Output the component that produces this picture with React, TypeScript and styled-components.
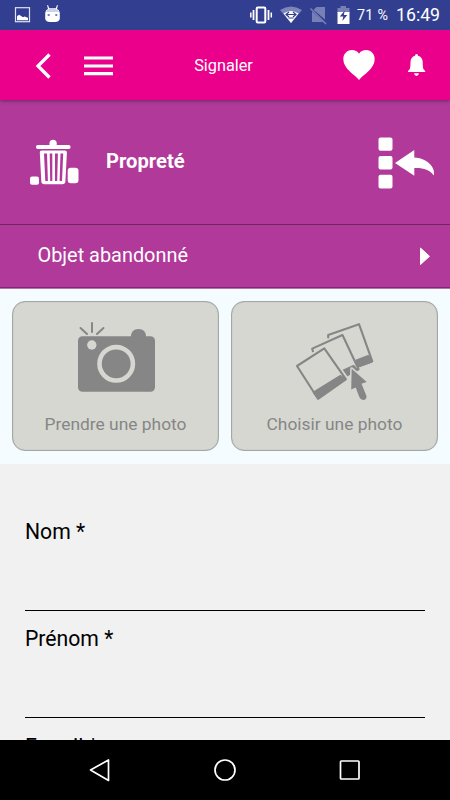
import React from "react";
import styled, { createGlobalStyle } from "styled-components";

const GlobalStyle = createGlobalStyle`
  * { box-sizing: border-box; }
  body { margin: 0; font-family: Roboto, "Liberation Sans", sans-serif; }
  svg { display: block; flex: none; }
`;

const Screen = styled.div`
  width: 450px;
  height: 800px;
  display: flex;
  flex-direction: column;
  overflow: hidden;
  background: #f1f1f1;
`;

const StatusBar = styled.div`
  height: 30px;
  flex: none;
  display: flex;
  align-items: center;
  background: #323f91;
  border-bottom: 1px solid #274b8e;
  color: #fff;
`;

const Battery = styled.span`
  width: 39px;
  font-size: 14.3px;
  line-height: 28px;
  letter-spacing: 0.3px;
  white-space: nowrap;
`;

const Clock = styled.span`
  font-size: 17.7px;
  line-height: 28px;
`;

const AppBar = styled.header`
  height: 70px;
  flex: none;
  display: flex;
  background: #eb008c;
  color: #fff;
  z-index: 1;
  box-shadow: 0 1px 3px rgba(70, 40, 80, 0.75);
`;

const Title = styled.h1`
  margin: 0;
  width: 145px;
  text-align: center;
  font-size: 16.3px;
  font-weight: 400;
  line-height: 71px;
`;

const CategoryRow = styled.div`
  height: 125px;
  flex: none;
  display: flex;
  align-items: center;
  background: #b03999;
  border-bottom: 1px solid #6e265f;
  color: #fff;
`;

const CategoryName = styled.strong`
  width: 253px;
  padding: 0 0 2px 6px;
  font-size: 20.2px;
  font-weight: 700;
  line-height: 24px;
`;

const SubCategoryRow = styled.div`
  height: 64px;
  flex: none;
  display: flex;
  align-items: center;
  justify-content: space-between;
  padding: 0 19px 2px 37.5px;
  background: #b03999;
  border-bottom: 1px solid #ab77a4;
  box-shadow: inset 0 -1px 0 #85237a;
  color: #fff;
  font-size: 19.9px;
  line-height: 24px;
`;

const PhotoArea = styled.section`
  height: 175px;
  flex: none;
  display: grid;
  grid-template-columns: 207px 207px;
  column-gap: 12px;
  padding: 12px 0 13px 12px;
  background: #f4fcff;
`;

const PhotoButton = styled.button`
  display: flex;
  flex-direction: column;
  align-items: center;
  padding: 15px 0 0;
  border: 1px solid #a3a7a8;
  border-radius: 13px;
  box-shadow: inset 0 0 1px #8c8e8e;
  background: #d6d7d1;
  color: #868686;
  font: 400 17.4px/24px Roboto, "Liberation Sans", sans-serif;
`;

const PhotoLabel = styled.span`
  margin-top: 11px;
`;

const Form = styled.form`
  flex: 1;
  min-height: 0;
  overflow: hidden;
  padding: 54px 25px 0;
`;

const Field = styled.label`
  height: 107px;
  display: flex;
  flex-direction: column;
  color: #000;
  font-size: 21.2px;
  line-height: 28px;

  &:last-child {
    padding-top: 1px;
  }
`;

const Input = styled.input`
  height: 65px;
  padding: 0;
  border: 0;
  border-bottom: 1px solid #000;
  background: transparent;
  font: inherit;
  outline: none;
`;

const NavBar = styled.nav`
  height: 60px;
  flex: none;
  display: flex;
  align-items: center;
  justify-content: space-around;
  padding: 0 37px;
  background: #000;
`;

const StatusIconsLeft = () => (
  <svg width="240" height="29" viewBox="0 0 240 29" fill="#fff">
    <rect x="15.5" y="7.7" width="14" height="14" fill="none" stroke="#dfe2f3" strokeWidth="1.2" />
    <path d="M17 20.3v-4l2-1.5 2.5 1.4 1.5 1 1.5-.8 3.5 1.3v2.600z" />
    <path d="M45.500 12q0-2 2.500-3.100l-.9-3.700.9-.2 1.200 3.300h6.600L57 5l.9.200-.9 3.700q2.500 1.100 2.500 3.100l.3 1v6q-1 3-4.600 3h-5.400q-3.600 0-4.600-3v-6z" />
    <path d="M46 12q1-3.500 6.500-3.500T59 12z" fill="#cdd1e8" />
    <rect x="47.700" y="14" width="2" height="2" fill="#7580b6" />
    <rect x="55.300" y="14" width="2" height="2" fill="#7580b6" />
  </svg>
);

const StatusIconsRight = () => (
  <svg width="117" height="29" viewBox="240 0 117 29" fill="none">
    <rect x="256.700" y="7.500" width="8.600" height="15" rx="1" stroke="#fff" strokeWidth="2" />
    <path d="M253.500 10v10M268.500 10v10" stroke="#fff" strokeWidth="1.800" />
    <path d="M250.800 12.500v5M271.300 12.500v5" stroke="#fff" strokeWidth="1.500" />
    <path d="M280 10q11-7 22 0l-11 13z" fill="#7d86bb" />
    <path d="M283.500 13.500q7.500-5 15 0L291 23z" fill="#fff" />
    <path d="M286 14.500h10M289 12l-3 2.500 3 2.500M293 12l3 2.500-3 2.500M288.500 18h5" stroke="#323f91" strokeWidth="1.200" />
    <path d="M316.500 7H325v12.500L313.500 9.700zM312 11.500L323.500 22H312z" fill="#7780b6" />
    <path d="M310.500 8.500L326 24" stroke="#7780b6" strokeWidth="1.500" />
    <path d="M337.500 8h3V6h5.500v2h3.500v5h-12z" fill="#7780b6" />
    <path d="M337.500 12h12v12h-12z" fill="#fff" />
    <path d="M344.800 10.500l-5 6h3.500l-1 4.500 5-6h-3.500z" fill="#323f91" />
  </svg>
);

const MenuIcons = () => (
  <svg width="151" height="70" viewBox="0 30 151 70" fill="none" stroke="#fff">
    <path d="M49.500 54.500L38 66l11.500 11.500" strokeWidth="3.300" />
    <path d="M84 58h29M84 66h29M84 73.700h29" strokeWidth="3.200" />
  </svg>
);

const AlertIcons = () => (
  <svg width="154" height="70" viewBox="296 30 154 70" fill="#fff">
    <path d="M359 80C355 74.500 343.300 69 343.300 59.200C343.300 54 347 50 351.700 50C355 50 357.500 51.300 359 53.700C360.500 51.300 363 50 366.300 50C371 50 374.700 54 374.700 59.200C374.700 69 363 74.500 359 80z" />
    <path d="M415 55.800q0-1.800 1.500-1.800t1.500 1.800q4.500 1.200 4.700 6.200 0 6 1 7.500l1.500 1.500V72H408v-1l1.500-1.500q1-1.500 1-7.500.2-5 4.500-6.200zM414 73.200h5q-.5 2.800-2.500 2.800t-2.500-2.800z" />
  </svg>
);

const TrashIcon = () => (
  <svg width="100" height="80" viewBox="0 121 100 80" fill="#fff">
    <path d="M49.500 144.500v-2.200q0-3.500 3.600-3.500t3.600 3.500v2.200z" />
    <rect x="36" y="144" width="34.500" height="4" rx="1.800" />
    <path fillRule="evenodd" d="M41.500 149.500h23.500q2 0 1.900 2l-1.500 29q-.2 2.800-3 2.800H44.300q-2.800 0-3-2.800l-1.500-29q-.1-2 1.700-2zM44 152.500L45.300 180H47.900L47 152.500zM49.700 152.500L50.200 180H52.300V152.500zM55 152.500V180H57.200L57.900 152.500zM60.500 152.500L59.600 180H62L63.200 152.500z" />
    <rect x="30" y="175.500" width="9" height="8.300" rx="2" />
    <rect x="67.700" y="166.700" width="10.800" height="15.500" rx="3.200" />
  </svg>
);

const ReturnIcon = () => (
  <svg width="97" height="80" viewBox="353 121 97 80" fill="#fff">
    <rect x="378.500" y="136.500" width="14" height="13.300" rx="2" />
    <rect x="378.500" y="155" width="14" height="13.600" rx="2" />
    <rect x="378.500" y="173.800" width="14" height="13.700" rx="2" />
    <path d="M395 162L414.300 149V156.500C426 157 435.500 165 434 174.500C429.500 168.500 422.500 166.500 414.300 167V174.700z" />
  </svg>
);

const CameraIcon = () => (
  <svg width="90" height="84" viewBox="71 317 90 84" fill="#868686">
    <path d="M80.500 328l6.500 6M92 323v9M103.500 328l-6.500 6" stroke="#868686" strokeWidth="2" strokeLinecap="round" />
    <rect x="78" y="336.300" width="77" height="55.500" rx="4.500" />
    <path d="M131 337q0-8 7.500-8t7.500 8z" />
    <circle cx="91.800" cy="345" r="4.700" fill="#d6d7d1" />
    <circle cx="116.200" cy="363.800" r="16.700" fill="none" stroke="#d6d7d1" strokeWidth="4.600" />
  </svg>
);

const GalleryIcon = () => (
  <svg width="90" height="84" viewBox="290 317 90 84" fill="#d6d7d1" stroke="#868686" strokeWidth="2.100" strokeLinejoin="round" strokeLinecap="round">
    <path d="M328.200 337.500V335L359 324.200 372.300 361.300 358.500 366.200" />
    <path d="M356.500 360.500L368.300 356 371.500 361.700 358.800 366.200z" fill="#868686" />
    <path d="M313 351.500L312.200 348.600 342.500 335 358.600 369.300 342 377" />
    <path d="M341.500 371.500L353.500 366 356.500 369.500 345 376.500z" fill="#868686" />
    <path d="M324.300 347.900L346.300 379.300 318 399 296.800 366z" stroke="#d6d7d1" strokeWidth="5" />
    <path d="M324.300 348.400L345.800 379.200 318 398.700 297 366z" />
    <path d="M313.800 392.500L340.500 376 345.500 379.500 318.500 398.500z" fill="#868686" />
    <path d="M351.700 368.700L366.700 382 361.500 383.800 366.300 395.500Q367.300 399 364 399.900Q360.700 400.500 359.300 397L355.700 387.500 351.200 389.500z" fill="#868686" stroke="#d6d7d1" strokeWidth="3" paintOrder="stroke" />
  </svg>
);

export default function App() {
  return (
    <>
      <GlobalStyle />
      <Screen>
        <StatusBar>
          <StatusIconsLeft />
          <StatusIconsRight />
          <Battery>71 %</Battery>
          <Clock>16:49</Clock>
        </StatusBar>
        <AppBar>
          <MenuIcons />
          <Title>Signaler</Title>
          <AlertIcons />
        </AppBar>
        <CategoryRow>
          <TrashIcon />
          <CategoryName>Propreté</CategoryName>
          <ReturnIcon />
        </CategoryRow>
        <SubCategoryRow>
          <span>Objet abandonné</span>
          <svg width="12" height="20" viewBox="0 0 12 20">
            <path d="M1.500 2L10.500 10.300 1.500 18.500z" fill="#fff" stroke="#fff" strokeLinejoin="round" />
          </svg>
        </SubCategoryRow>
        <PhotoArea>
          <PhotoButton type="button">
            <CameraIcon />
            <PhotoLabel>Prendre une photo</PhotoLabel>
          </PhotoButton>
          <PhotoButton type="button">
            <GalleryIcon />
            <PhotoLabel>Choisir une photo</PhotoLabel>
          </PhotoButton>
        </PhotoArea>
        <Form>
          {["Nom *", "Prénom *", "E-mail *"].map((label) => (
            <Field key={label}>
              {label}
              <Input />
            </Field>
          ))}
        </Form>
        <NavBar>
          <svg width="24" height="24" viewBox="0 0 24 24" fill="none" stroke="#fff" strokeWidth="1.700" strokeLinejoin="round">
            <path d="M20.500 2v20.500L2.500 12z" />
          </svg>
          <svg width="24" height="24" viewBox="0 0 24 24" fill="none" stroke="#fff" strokeWidth="1.700">
            <circle cx="12" cy="12" r="10" />
          </svg>
          <svg width="24" height="24" viewBox="0 0 24 24" fill="none" stroke="#fff" strokeWidth="1.700">
            <rect x="2.500" y="3" width="18.500" height="18" rx="0.800" />
          </svg>
        </NavBar>
      </Screen>
    </>
  );
}
